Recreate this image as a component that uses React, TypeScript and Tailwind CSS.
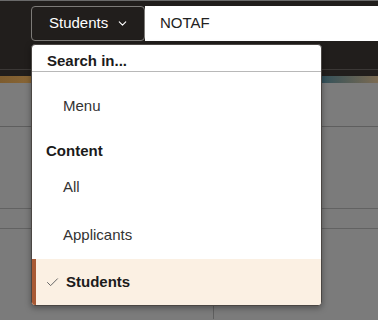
import { Check, ChevronDown } from "lucide-react";

const font = { fontFamily: '"Liberation Sans", Arial, sans-serif' };

export default function App() {
  return (
    <div className="relative h-[320px] w-[378px] overflow-hidden bg-[#7b7b7b]" style={font}>
      {/* page behind the menu */}
      <div className="h-[76px] border-t border-[#6a6a6a] bg-[#211e1c] pt-[5px]">
        <div className="flex h-[35px] pl-[31px]">
          <button className="flex w-[114px] items-center gap-[8px] rounded-[4px] border border-[#7d7b78] pl-[17px] text-[15px] text-white">
            Students
            <ChevronDown className="h-[13px] w-[13px]" strokeWidth={2} />
          </button>
          <div className="flex flex-1 items-center bg-white pl-[15px] text-[15px] text-[#222]">NOTAF</div>
        </div>
        <div className="mt-[28px] h-px bg-[#3b3836]" />
      </div>
      <div className="h-[7px] bg-[linear-gradient(90deg,#7d5c2e_0%,#9a7440_20%,#6b5a45_45%,#2e4a52_70%,#31505a_85%,#7c6b52_100%)]" />
      <div className="h-[44px] border-b border-[#5e5e5e] bg-[#7c7c7c]" />
      <div className="grid h-[82px] grid-cols-[214px_1fr] border-b border-[#626262]">
        <div className="border-r border-[#6a6a6a]" />
        <div />
      </div>
      <div className="grid h-[20px] grid-cols-[214px_1fr] border-b border-[#626262]">
        <div className="border-r border-[#6a6a6a]" />
        <div />
      </div>
      <div className="grid h-[90px] grid-cols-[214px_1fr]">
        <div className="border-r border-[#5f5f5f]" />
        <div />
      </div>

      {/* dropdown menu */}
      <div className="absolute left-[31px] top-[44px] w-[291px] overflow-hidden rounded-[4px] border border-[#4a4643] bg-white shadow-[0_2px_6px_rgba(0,0,0,0.35)]">
        <div className="h-[27px] border-b border-[#b8b8b8] pl-[15px] pt-[7px] text-[15px] font-bold leading-[18px] text-[#1b1b1b]">
          Search in...
        </div>
        <div className="pl-[31px] pt-[25px] text-[15px] leading-[18px] text-[#333]">Menu</div>
        <div className="mt-[27px] pl-[14px] text-[15px] font-bold leading-[18px] text-[#1b1b1b]">Content</div>
        <div className="mt-[18px] pl-[31px] text-[15px] leading-[18px] text-[#333]">All</div>
        <div className="mt-[30px] pl-[31px] text-[15px] leading-[18px] text-[#333]">Applicants</div>
        <div className="mt-[15px] flex h-[46px] items-center border-l-4 border-[#a85a35] bg-[#fbf0e3] pl-[9px] text-[15px] font-bold leading-[18px] text-[#1b1b1b]">
          <Check className="mr-[6px] h-[15px] w-[15px] text-[#666]" strokeWidth={1.6} />
          Students
        </div>
      </div>
    </div>
  );
}
